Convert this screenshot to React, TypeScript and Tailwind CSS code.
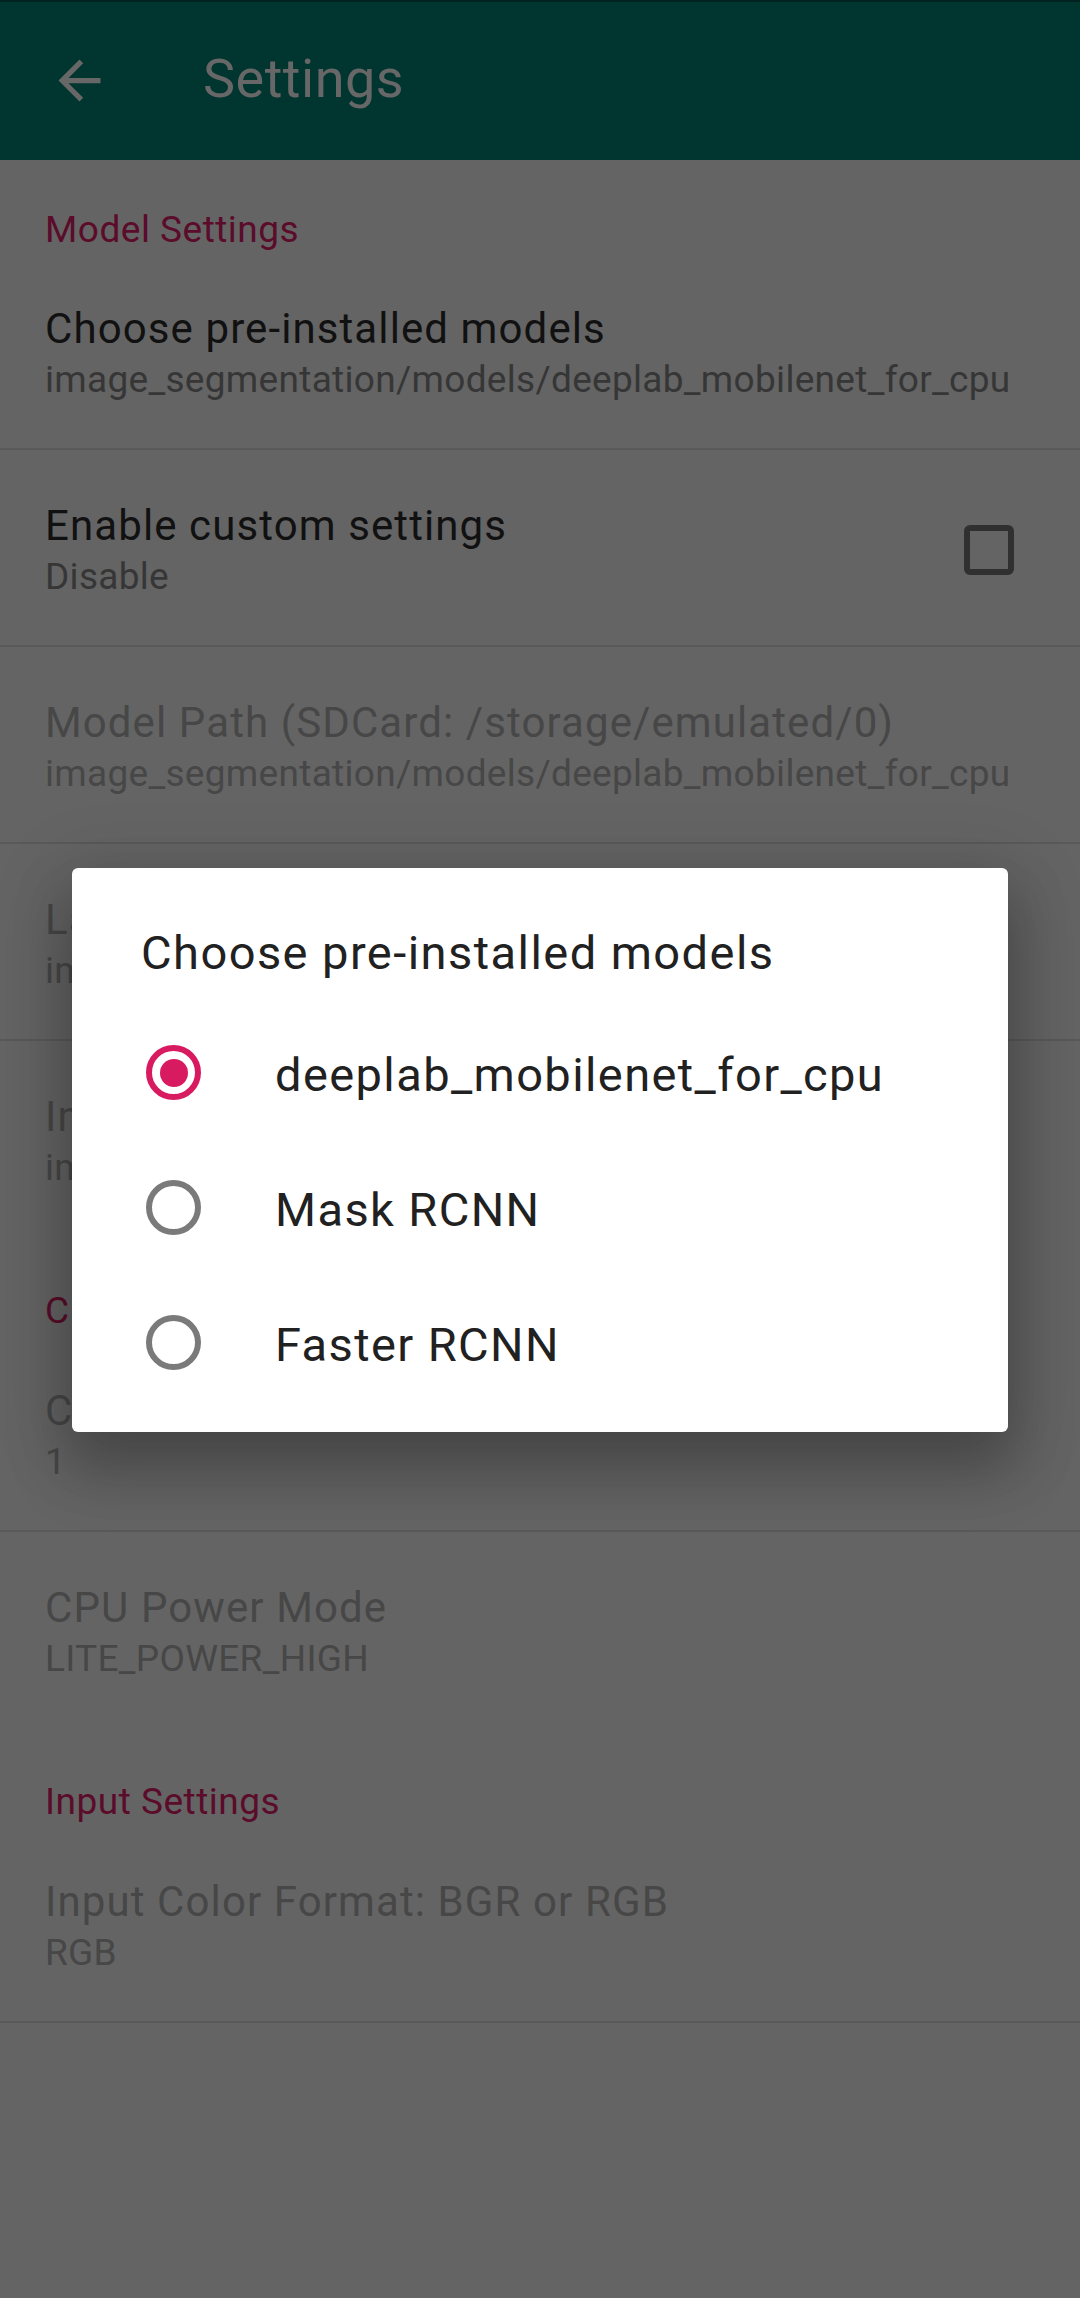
import React from "react";

type Item = { title: string; summary: string; disabled?: boolean; divider?: boolean; checkbox?: boolean };

function Category({ label, first }: { label: string; first?: boolean }) {
  return (
    <div className={first ? "h-[93px] pt-[45px] px-[45px]" : "h-[97px] pt-[48px] px-[45px]"}>
      <div className="text-[37px] leading-[50px] tracking-[0.5px] text-[#5a0c2a] whitespace-nowrap">{label}</div>
    </div>
  );
}

function Pref({ item }: { item: Item }) {
  const titleColor = item.disabled ? "text-[#474747]" : "text-[#111111]";
  const sumColor = item.disabled ? "text-[#474747]" : "text-[#363636]";
  return (
    <div
      className={`h-[197px] flex items-start pl-[45px] pr-[66px] pt-[50px] border-b-2 ${
        item.divider ? "border-[#595959]" : "border-transparent"
      }`}
    >
      <div className="flex-1 min-w-0">
        <div className={`text-[42px] leading-[52px] tracking-[1.1px] whitespace-nowrap ${titleColor}`}>{item.title}</div>
        <div className={`text-[37px] leading-[50px] tracking-[0.3px] whitespace-nowrap ${sumColor}`}>{item.summary}</div>
      </div>
      {item.checkbox && (
        <div className="mt-[25px] w-[50px] h-[50px] rounded-[6px] border-[6px] border-[#303030]" />
      )}
    </div>
  );
}

function Radio({ checked }: { checked?: boolean }) {
  return (
    <div
      className={`w-[55px] h-[55px] rounded-full border-[6px] flex items-center justify-center ${
        checked ? "border-[#D81B60]" : "border-[#7a7a7a]"
      }`}
    >
      {checked && <div className="w-[28px] h-[28px] rounded-full bg-[#D81B60]" />}
    </div>
  );
}

export default function App() {
  const font = { fontFamily: 'Roboto, "Noto Sans", sans-serif' };
  return (
    <div className="relative w-[1080px] min-h-[2298px] bg-[#646464] overflow-hidden" style={font}>
      {/* App bar */}
      <div className="h-[2px] bg-[#00231f]" />
      <div className="h-[158px] bg-[#003530] flex items-center">
        <div className="w-[63px] h-[63px] ml-[48px] -mt-[2px]">
          <svg viewBox="0 0 24 24" width="63" height="63">
            <path d="M20 11H7.83l5.59-5.59L12 4l-8 8 8 8 1.41-1.41L7.83 13H20v-2z" fill="#676767" />
          </svg>
        </div>
        <div className="ml-[92px] text-[54px] leading-[64px] tracking-[0.5px] text-[#676767] -mt-[4px]">Settings</div>
      </div>

      {/* List */}
      <Category label="Model Settings" first />
      <Pref item={{ title: "Choose pre-installed models", summary: "image_segmentation/models/deeplab_mobilenet_for_cpu", divider: true }} />
      <Pref item={{ title: "Enable custom settings", summary: "Disable", divider: true, checkbox: true }} />
      <Pref item={{ title: "Model Path (SDCard: /storage/emulated/0)", summary: "image_segmentation/models/deeplab_mobilenet_for_cpu", disabled: true, divider: true }} />
      <Pref item={{ title: "Label Path", summary: "image_segmentation/labels/label_list", disabled: true, divider: true }} />
      <Pref item={{ title: "Image Path", summary: "image_segmentation/images/human.jpg", disabled: true }} />
      <Category label="CPU Settings" />
      <Pref item={{ title: "CPU Thread Num", summary: "1", disabled: true, divider: true }} />
      <Pref item={{ title: "CPU Power Mode", summary: "LITE_POWER_HIGH", disabled: true }} />
      <Category label="Input Settings" />
      <Pref item={{ title: "Input Color Format: BGR or RGB", summary: "RGB", disabled: true, divider: true }} />

      {/* Dialog */}
      <div className="absolute left-[72px] top-[868px] w-[936px] h-[564px] bg-white rounded-[6px] shadow-[0_36px_60px_6px_rgba(0,0,0,0.22),0_12px_70px_14px_rgba(0,0,0,0.12)] pt-[57px] pb-[22px]">
        <div className="pl-[69px] text-[47px] leading-[56px] tracking-[1.45px] text-[#212121] whitespace-nowrap">Choose pre-installed models</div>
        <div className="mt-[24px]">
          {[
            { label: "deeplab_mobilenet_for_cpu", checked: true },
            { label: "Mask RCNN" },
            { label: "Faster RCNN" },
          ].map((o) => (
            <div key={o.label} className="h-[135px] flex items-center pl-[74px]">
              <Radio checked={o.checked} />
              <div className="ml-[74px] mt-[5px] text-[47px] leading-[56px] tracking-[1.4px] text-[#212121] whitespace-nowrap">{o.label}</div>
            </div>
          ))}
        </div>
      </div>
    </div>
  );
}
